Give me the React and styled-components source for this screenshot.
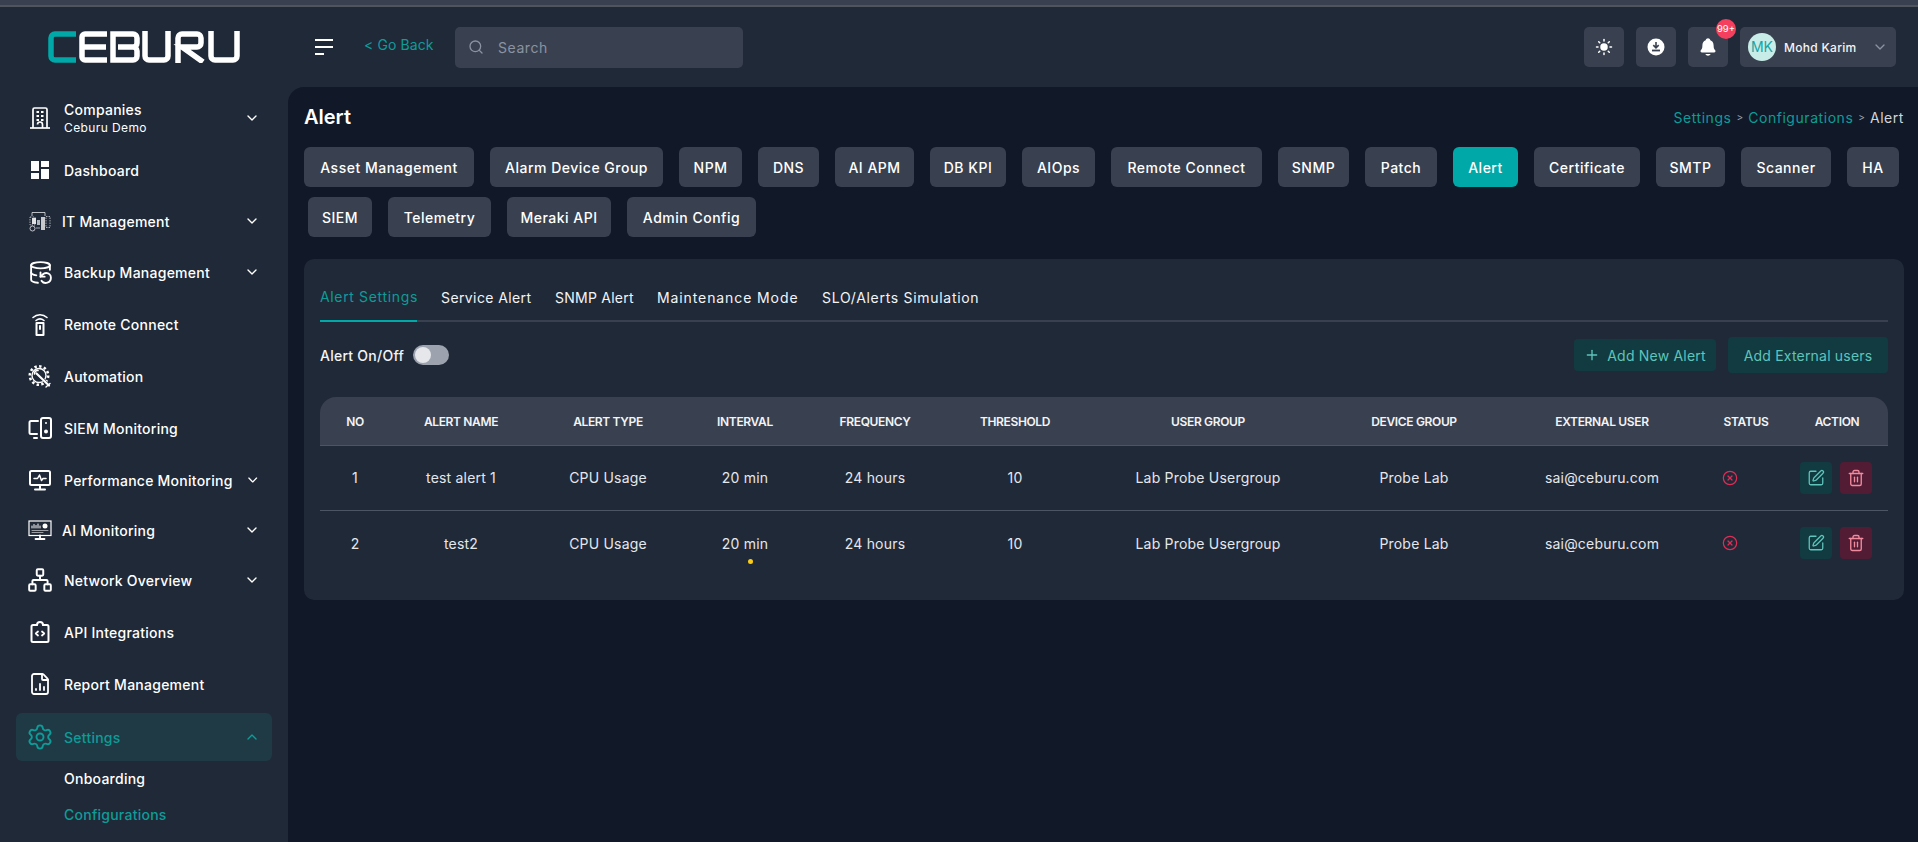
import styled, { createGlobalStyle } from "styled-components";
import {
  ChevronDown,
  ChevronUp,
  CircleX,
  DatabaseBackup,
  FileChartColumn,
  Network,
  Plus,
  Search,
  Settings,
  SquarePen,
  Sun,
  Trash2,
} from "lucide-react";
import { MdDashboard } from "react-icons/md";
import { IoNotifications } from "react-icons/io5";

/* theme */
const COLORS = {
  panel: "#202938",
  page: "#111827",
  control: "#394150",
  line: "#4b5563",
  teal: "#0d9c98",
  tealBright: "#00a8a8",
  tealSoft: "#5fc4bb",
  tealDark: "#113b40",
  roseDark: "#521c35",
  rose: "#e02d55",
  text: "#f3f4f6",
};

const FONT = `Inter, "Open Sans", "Liberation Sans", sans-serif`;

const GlobalStyle = createGlobalStyle`
  * { box-sizing: border-box; }
  html, body { margin: 0; height: 100%; background: ${COLORS.panel}; overflow: hidden; }
  body { font-family: ${FONT}; color: ${COLORS.text}; }
`;

/* drawn icons, no package has these */
const CompanyIcon = () => (
  <svg width="24" height="24" viewBox="0 0 24 24" fill="none" stroke="#fff" strokeWidth="1.700">
    <path d="M5 22V3.500A1.500 1.500 0 0 1 6.500 2h11A1.500 1.500 0 0 1 19 3.500V22" />
    <path d="M2 22h20" />
    <path d="M9.500 18.500a2.500 2.500 0 0 1 5 0V22" />
    <path d="M8.500 6h2.500M13 6h2.500M8.500 10h2.500M13 10h2.500M8.500 14h2.500M13 14h2.500" strokeWidth="2" />
  </svg>
);

const ItIcon = () => (
  <svg width="22" height="22" viewBox="0 0 22 22" fill="none" stroke="#fff">
    <path d="M3 6V2.500h13V6" strokeWidth="1" opacity=".7" />
    <path d="M1 7h5v8H1zM17 6.500h4v11h-4z" strokeWidth="1" strokeDasharray="1.500 1" opacity=".6" />
    <path d="M3 8h4v6H3z" fill="#fff" stroke="none" opacity=".85" />
    <path d="M8 10h3v5H8z" fill="#fff" stroke="none" opacity=".65" />
    <path d="M12 7h4v13h-4z" fill="#fff" stroke="none" opacity=".75" />
    <circle cx="3.500" cy="18.500" r="2.500" strokeWidth="1" opacity=".7" />
    <path d="M7 18h4" strokeWidth="1" opacity=".6" />
  </svg>
);

const RemoteIcon = () => (
  <svg width="24" height="24" viewBox="0 0 24 24" fill="none" stroke="#fff" strokeWidth="2" strokeLinecap="round">
    <path d="M5 5.500C9 1.800 15 1.800 19 5.500" strokeWidth="1.600" />
    <path d="M8 8.500c2.500-2 5.500-2 8 0" strokeWidth="1.600" />
    <path d="M8.500 11h7v12h-7z" strokeLinejoin="round" />
    <path d="M12 14v3" />
  </svg>
);

const AutomationIcon = () => (
  <svg width="24" height="24" viewBox="0 0 24 24" fill="none" stroke="#fff" strokeLinecap="round">
    <circle cx="11" cy="11.500" r="9.200" strokeWidth="2.600" strokeDasharray="2.400 2.400" strokeLinecap="butt" />
    <circle cx="11" cy="11.500" r="7" strokeWidth="1.400" />
    <path d="M7.500 8.500 L20 20.500" strokeWidth="3" stroke="#202938" />
    <path d="M8.500 9.500 L21 21.500" strokeWidth="2.200" />
    <path d="M6.500 10a3 3 0 0 1 3.500-3.500" strokeWidth="1.600" />
    <path d="M18 23l4-3.500" strokeWidth="1.400" />
  </svg>
);

const SiemIcon = () => (
  <svg width="24" height="24" viewBox="0 0 24 24" fill="none" stroke="#fff" strokeWidth="2" strokeLinecap="round" strokeLinejoin="round">
    <path d="M10 5H3a1.500 1.500 0 0 0-1.500 1.500v10A1.500 1.500 0 0 0 3 18h6" />
    <path d="M6 22h3" />
    <rect x="13" y="2" width="10" height="20" rx="2" />
    <circle cx="18" cy="7" r="1" fill="#fff" stroke="none" />
    <circle cx="18" cy="15.500" r="2" fill="#fff" stroke="none" />
  </svg>
);

const PerformanceIcon = () => (
  <svg width="24" height="24" viewBox="0 0 24 24" fill="none" stroke="#fff" strokeWidth="2" strokeLinecap="round" strokeLinejoin="round">
    <rect x="2" y="3" width="20" height="14" rx="1.500" />
    <path d="M6 10.500h3.500l2-3.500 2 5.500 1.500-2h3" strokeWidth="1.500" />
    <path d="M12 17v4M7 21.500h10" />
  </svg>
);

const AiIcon = () => (
  <svg width="24" height="24" viewBox="0 0 24 24" fill="none" stroke="#fff" strokeLinecap="round">
    <rect x="1" y="3" width="22" height="14.500" strokeWidth="1.200" />
    <path d="M4 10V8M6 10V6.500M8 10V7.500M10 10V6M12 10V8" strokeWidth="1" />
    <circle cx="17" cy="8" r="2.500" fill="#fff" stroke="none" />
    <path d="M4 12.500h16M4 14.500h11" strokeWidth=".8" opacity=".7" />
    <path d="M12 17.500v3M7.500 21h9" strokeWidth="1.800" />
  </svg>
);

const ApiIcon = () => (
  <svg width="24" height="24" viewBox="0 0 24 24" fill="none" stroke="#fff" strokeWidth="2" strokeLinecap="round" strokeLinejoin="round">
    <path d="M9 5H5a1.500 1.500 0 0 0-1.500 1.500v14A1.500 1.500 0 0 0 5 22h14a1.500 1.500 0 0 0 1.500-1.500v-14A1.500 1.500 0 0 0 19 5h-4" />
    <path d="M9 5a3 3 0 0 1 6 0" />
    <path d="M10 11.500 7.800 13.500l2.200 2M14 11.500l2.200 2-2.200 2" strokeWidth="1.800" />
  </svg>
);

const DownloadIcon = () => (
  <svg width="18" height="18" viewBox="0 0 18 18">
    <circle cx="9" cy="9" r="8.500" fill="#fff" />
    <path d="M9 4v5.500M6.300 7.200 9 9.800l2.700-2.600" fill="none" stroke={COLORS.control} strokeWidth="1.600" />
    <path d="M5 12.500h8" stroke={COLORS.control} strokeWidth="1.800" />
  </svg>
);

const Logo = () => (
  <svg width="192" height="32" viewBox="0 0 192 32" fill="none" strokeWidth="5.500" role="img" aria-label="CEBURU">
    <path d="M28 3H7a4 4 0 0 0-4 4v18a4 4 0 0 0 4 4h21" stroke={COLORS.tealBright} />
    <g stroke="#fff">
      <path d="M59 3H37a3 3 0 0 0-3 3v20a3 3 0 0 0 3 3h22M34 16h24" />
      <path d="M65 3h20a4 4 0 0 1 4 4v5a4 4 0 0 1-4 4H70h15a4 4 0 0 1 4 4v5a4 4 0 0 1-4 4H65z" />
      <path d="M97 0v25a4 4 0 0 0 4 4h15a4 4 0 0 0 4-4V0" />
      <path d="M130 32V7a4 4 0 0 1 4-4h15a4 4 0 0 1 4 4v5a4 4 0 0 1-4 4h-15l21 15" />
      <path d="M163 0v25a4 4 0 0 0 4 4h18a4 4 0 0 0 4-4V0" />
    </g>
  </svg>
);

/* shell */
const Strip = styled.div`
  height: 7px;
  background: ${COLORS.control};
  border-bottom: 2px solid #50545c;
`;

const Shell = styled.div`
  display: grid;
  grid-template-columns: 288px 1fr;
  height: 835px;
`;

/* sidebar */
const Sidebar = styled.aside`
  background: ${COLORS.panel};
  padding: 0 16px;
  overflow: hidden;
`;

const LogoWrap = styled.div`
  height: 84px;
  padding: 24px 0 0 32px;
`;

const NavRow = styled.div`
  display: flex;
  align-items: center;
  height: ${({ $h }) => $h || 52}px;
  padding: 0 12px;
  gap: ${({ $gap }) => $gap || 12}px;
  border-radius: 6px;
  font-size: 14px;
  font-weight: 500;
  letter-spacing: 0.25px;
  color: ${({ $active }) => ($active ? COLORS.teal : "#fff")};
  background: ${({ $active }) => ($active ? "#1f3a45" : "transparent")};
  margin-top: ${({ $active }) => ($active ? "3px" : "0")};
`;

const NavIcon = styled.span`
  display: flex;
  justify-content: center;
  width: 24px;
  flex: none;

  svg {
    flex: none;
  }
`;

const NavText = styled.span`
  flex: 1;
  white-space: nowrap;
`;

const NavSub = styled.div`
  font-size: 12px;
  font-weight: 400;
  line-height: 16px;
  letter-spacing: 0.4px;
`;

const NavTitle = styled.div`
  line-height: 20px;
`;

const SubLink = styled.div`
  height: 36px;
  line-height: 36px;
  padding-left: 48px;
  font-size: 14px;
  font-weight: 500;
  letter-spacing: 0.25px;
  color: ${({ $active }) => ($active ? COLORS.teal : "#fff")};
`;

/* topbar */
const Column = styled.div`
  display: flex;
  flex-direction: column;
  min-width: 0;
`;

const Topbar = styled.header`
  flex: none;
  height: 80px;
  display: flex;
  align-items: center;
  padding: 0 22px 0 27px;
  background: ${COLORS.panel};
`;

const Burger = styled.button`
  display: flex;
  flex-direction: column;
  gap: 5px;
  width: 18px;
  padding: 0;
  border: 0;
  background: none;
  margin-right: 31px;

  span {
    height: 2px;
    background: #fff;
  }
  span:last-child {
    width: 9px;
  }
`;

const GoBack = styled.a`
  width: 91px;
  margin-top: -6px;
  font-size: 14px;
  letter-spacing: 0.1px;
  color: ${COLORS.teal};
`;

const SearchBox = styled.label`
  width: 288px;
  height: 41px;
  display: flex;
  align-items: center;
  gap: 14px;
  padding-left: 13px;
  border-radius: 5px;
  background: ${COLORS.control};
  color: #8b93a1;
  font-size: 14px;
  letter-spacing: 0.55px;
`;

const TopActions = styled.div`
  margin-left: auto;
  display: flex;
  align-items: center;
  gap: 12px;
`;

const IconButton = styled.button`
  position: relative;
  width: 40px;
  height: 40px;
  display: flex;
  align-items: center;
  justify-content: center;
  padding: 0;
  border: 0;
  border-radius: 5px;
  background: ${COLORS.control};
  color: #fff;
`;

const Badge = styled.span`
  position: absolute;
  top: -8px;
  right: -8px;
  width: 20px;
  height: 20px;
  border-radius: 50%;
  background: #f43f5e;
  font-family: ${FONT};
  font-size: 9.500px;
  line-height: 20px;
  text-align: center;
  color: #fff;
`;

const UserMenu = styled.div`
  width: 156px;
  height: 40px;
  display: flex;
  align-items: center;
  padding: 0 8px;
  border-radius: 5px;
  background: ${COLORS.control};
  font-size: 12px;
  font-weight: 500;
  letter-spacing: 0.3px;

  svg {
    margin-left: auto;
    margin-right: 0;
    color: #8b93a1;
  }
`;

const Avatar = styled.span`
  width: 28px;
  height: 28px;
  margin-right: 8px;
  border-radius: 50%;
  background: #c8ece8;
  color: #17a5a5;
  font-size: 14px;
  font-weight: 400;
  letter-spacing: 0;
  line-height: 28px;
  text-align: center;
`;

/* page */
const Main = styled.main`
  flex: 1;
  padding: 16px 14px 0 16px;
  background: ${COLORS.page};
  border-top-left-radius: 16px;
`;

const TitleRow = styled.div`
  display: flex;
  align-items: center;
  justify-content: space-between;
  height: 28px;
`;

const PageTitle = styled.h1`
  margin: 0;
  font-size: 20px;
  font-weight: 600;
  color: #fff;
`;

const Crumbs = styled.nav`
  display: flex;
  align-items: center;
  gap: 5px;
  font-size: 14px;
  letter-spacing: 0.55px;
  color: #d1d5db;

  a {
    color: ${COLORS.teal};
  }
`;

const CrumbSep = styled.span`
  font-size: 10px;
  letter-spacing: 0;
  color: #9ca3af;
`;

const ChipRow = styled.div`
  display: flex;
  gap: 16px;
  margin-top: ${({ $top }) => $top}px;
  padding-left: ${({ $inset }) => $inset || 0}px;
`;

const Chip = styled.button`
  width: ${({ $w }) => $w}px;
  height: 40px;
  padding: 0;
  border: 0;
  border-radius: 6px;
  background: ${({ $active }) => ($active ? COLORS.tealBright : COLORS.control)};
  color: #fff;
  font-family: ${FONT};
  font-size: 14px;
  font-weight: 500;
  letter-spacing: 0.5px;
  white-space: nowrap;
`;

const Card = styled.section`
  margin-top: 22px;
  padding: 22px 16px 24px;
  border-radius: 10px;
  background: ${COLORS.panel};
`;

const TabBar = styled.div`
  display: flex;
  gap: 24px;
  border-bottom: 2px solid ${COLORS.control};
`;

const Tab = styled.a`
  width: ${({ $w }) => $w}px;
  height: 41px;
  margin-bottom: -2px;
  padding-top: ${({ $active }) => ($active ? 7 : 8)}px;
  border-bottom: 2px solid ${({ $active }) => ($active ? COLORS.tealBright : "transparent")};
  font-size: 14px;
  font-weight: 400;
  line-height: 18px;
  letter-spacing: ${({ $ls }) => $ls}px;
  white-space: nowrap;
  color: ${({ $active }) => ($active ? COLORS.teal : "#f3f4f6")};
`;

const Toolbar = styled.div`
  display: flex;
  align-items: center;
  height: 36px;
  margin-top: 15px;
`;

const ToggleLabel = styled.span`
  font-size: 14px;
  font-weight: 500;
  letter-spacing: 0.25px;
  margin-right: 9px;
`;

const Toggle = styled.span`
  display: flex;
  align-items: center;
  width: 36px;
  height: 20px;
  padding: 2px;
  border-radius: 10px;
  background: #9ca3af;

  &::before {
    content: "";
    width: 16px;
    height: 16px;
    border-radius: 50%;
    background: #e5e7eb;
  }
`;

const ActionGroup = styled.div`
  margin-left: auto;
  display: flex;
  align-items: center;
  gap: 12px;
`;

const TealButton = styled.button`
  display: flex;
  align-items: center;
  justify-content: center;
  gap: 7px;
  width: ${({ $w }) => $w}px;
  height: ${({ $h }) => $h}px;
  padding: 0;
  border: 0;
  border-radius: 4px;
  background: ${COLORS.tealDark};
  color: ${COLORS.tealSoft};
  font-family: ${FONT};
  font-size: 14px;
  letter-spacing: 0.2px;
`;

/* table */
const GRID = "70px 142px 152px 122px 138px 142px 244px 168px 208px 80px 102px";

const TableHead = styled.div`
  display: grid;
  grid-template-columns: ${GRID};
  align-items: center;
  height: 49px;
  margin-top: 24px;
  border-radius: 16px 16px 0 0;
  border-bottom: 1px solid ${COLORS.line};
  background: ${COLORS.control};
  font-size: 12px;
  font-weight: 600;
  letter-spacing: -0.35px;
  text-align: center;
  text-transform: uppercase;
`;

const TableRow = styled.div`
  display: grid;
  grid-template-columns: ${GRID};
  align-items: center;
  height: 65px;
  padding-bottom: 1px;
  border-bottom: ${({ $last }) => ($last ? "0" : `1px solid ${COLORS.line}`)};
  font-size: 14px;
  letter-spacing: 0.2px;
  color: #e5e7eb;
  text-align: center;
`;

const Cell = styled.div`
  position: relative;
`;

const StatusCell = styled.div`
  display: flex;
  padding-left: 16px;
  color: ${COLORS.rose};
`;

const ActionCell = styled.div`
  display: flex;
  justify-content: center;
  gap: 8px;
  padding-right: 2px;
`;

const RowButton = styled.button`
  width: 32px;
  height: 32px;
  display: flex;
  align-items: center;
  justify-content: center;
  padding: 0;
  border: 0;
  border-radius: 4px;
  background: ${({ $danger }) => ($danger ? COLORS.roseDark : COLORS.tealDark)};
  color: ${({ $danger }) => ($danger ? "#f08a9e" : COLORS.tealSoft)};
`;

const Dot = styled.span`
  position: absolute;
  left: 64px;
  top: 24px;
  width: 5px;
  height: 5px;
  border-radius: 50%;
  background: #facc15;
`;

const NAV = [
  { label: "Dashboard", icon: <MdDashboard size={24} /> },
  { label: "IT Management", icon: <ItIcon />, chevron: true, h: 50, gap: 10 },
  { label: "Backup Management", icon: <DatabaseBackup size={25} strokeWidth={1.8} />, chevron: true },
  { label: "Remote Connect", icon: <RemoteIcon /> },
  { label: "Automation", icon: <AutomationIcon /> },
  { label: "SIEM Monitoring", icon: <SiemIcon /> },
  { label: "Performance Monitoring", icon: <PerformanceIcon />, chevron: true },
  { label: "AI Monitoring", icon: <AiIcon />, chevron: true, h: 48, gap: 10 },
  { label: "Network Overview", icon: <Network size={26} strokeWidth={1.8} />, chevron: true },
  { label: "API Integrations", icon: <ApiIcon /> },
  { label: "Report Management", icon: <FileChartColumn size={24} strokeWidth={1.8} /> },
];

const CHIPS = [
  ["Asset Management", 170],
  ["Alarm Device Group", 173],
  ["NPM", 63],
  ["DNS", 61],
  ["AI APM", 79],
  ["DB KPI", 76],
  ["AIOps", 73],
  ["Remote Connect", 151],
  ["SNMP", 71],
  ["Patch", 72],
  ["Alert", 65],
  ["Certificate", 106],
  ["SMTP", 69],
  ["Scanner", 90],
  ["HA", 52],
];

const CHIPS_2 = [
  ["SIEM", 64],
  ["Telemetry", 103],
  ["Meraki API", 104],
  ["Admin Config", 129],
];

const TABS = [
  { label: "Alert Settings", w: 97, ls: 0.65 },
  { label: "Service Alert", w: 90, ls: 0.4 },
  { label: "SNMP Alert", w: 78, ls: 0.25 },
  { label: "Maintenance Mode", w: 141, ls: 0.9 },
  { label: "SLO/Alerts Simulation", w: 157, ls: 0.7 },
];

const HEADS = [
  "No",
  "Alert Name",
  "Alert Type",
  "Interval",
  "Frequency",
  "Threshold",
  "User Group",
  "Device Group",
  "External User",
  "Status",
  "Action",
];

const ROWS = [
  { no: 1, name: "test alert 1" },
  { no: 2, name: "test2", dot: true },
];

export default function App() {
  return (
    <>
      <GlobalStyle />
      <Strip />
      <Shell>
        <Sidebar>
          <LogoWrap>
            <Logo />
          </LogoWrap>
          <NavRow $h={53}>
            <NavIcon>
              <CompanyIcon />
            </NavIcon>
            <NavText>
              <NavTitle>Companies</NavTitle>
              <NavSub>Ceburu Demo</NavSub>
            </NavText>
            <ChevronDown size={16} />
          </NavRow>
          {NAV.map((item) => (
            <NavRow key={item.label} $h={item.h} $gap={item.gap}>
              <NavIcon>{item.icon}</NavIcon>
              <NavText>{item.label}</NavText>
              {item.chevron && <ChevronDown size={16} />}
            </NavRow>
          ))}
          <NavRow $h={48} $active>
            <NavIcon>
              <Settings size={28} strokeWidth={1.6} />
            </NavIcon>
            <NavText>Settings</NavText>
            <ChevronUp size={16} />
          </NavRow>
          <SubLink>Onboarding</SubLink>
          <SubLink $active>Configurations</SubLink>
        </Sidebar>

        <Column>
          <Topbar>
            <Burger aria-label="Menu">
              <span />
              <span />
              <span />
            </Burger>
            <GoBack>&lt; Go Back</GoBack>
            <SearchBox>
              <Search size={16} />
              Search
            </SearchBox>
            <TopActions>
              <IconButton aria-label="Theme">
                <Sun size={18} fill="#fff" />
              </IconButton>
              <IconButton aria-label="Download">
                <DownloadIcon />
              </IconButton>
              <IconButton aria-label="Notifications">
                <IoNotifications size={20} />
                <Badge>99+</Badge>
              </IconButton>
              <UserMenu>
                <Avatar>MK</Avatar>
                Mohd Karim
                <ChevronDown size={16} />
              </UserMenu>
            </TopActions>
          </Topbar>

          <Main>
            <TitleRow>
              <PageTitle>Alert</PageTitle>
              <Crumbs>
                <a>Settings</a>
                <CrumbSep>&gt;</CrumbSep>
                <a>Configurations</a>
                <CrumbSep>&gt;</CrumbSep>
                Alert
              </Crumbs>
            </TitleRow>
            <ChipRow $top={16}>
              {CHIPS.map(([label, w]) => (
                <Chip key={label} $w={w} $active={label === "Alert"}>
                  {label}
                </Chip>
              ))}
            </ChipRow>
            <ChipRow $top={10} $inset={4}>
              {CHIPS_2.map(([label, w]) => (
                <Chip key={label} $w={w}>
                  {label}
                </Chip>
              ))}
            </ChipRow>

            <Card>
              <TabBar>
                {TABS.map((tab, i) => (
                  <Tab key={tab.label} $w={tab.w} $ls={tab.ls} $active={i === 0}>
                    {tab.label}
                  </Tab>
                ))}
              </TabBar>
              <Toolbar>
                <ToggleLabel>Alert On/Off</ToggleLabel>
                <Toggle />
                <ActionGroup>
                  <TealButton $w={142} $h={32}>
                    <Plus size={16} />
                    Add New Alert
                  </TealButton>
                  <TealButton $w={160} $h={36}>
                    Add External users
                  </TealButton>
                </ActionGroup>
              </Toolbar>

              <TableHead>
                {HEADS.map((head) => (
                  <div key={head}>{head}</div>
                ))}
              </TableHead>
              {ROWS.map((row, i) => (
                <TableRow key={row.no} $last={i === ROWS.length - 1}>
                  <Cell>{row.no}</Cell>
                  <Cell>{row.name}</Cell>
                  <Cell>CPU Usage</Cell>
                  <Cell>
                    20 min
                    {row.dot && <Dot />}
                  </Cell>
                  <Cell>24 hours</Cell>
                  <Cell>10</Cell>
                  <Cell>Lab Probe Usergroup</Cell>
                  <Cell>Probe Lab</Cell>
                  <Cell>sai@ceburu.com</Cell>
                  <StatusCell>
                    <CircleX size={16} strokeWidth={1.8} />
                  </StatusCell>
                  <ActionCell>
                    <RowButton aria-label="Edit">
                      <SquarePen size={18} strokeWidth={1.7} />
                    </RowButton>
                    <RowButton $danger aria-label="Delete">
                      <Trash2 size={18} strokeWidth={1.8} />
                    </RowButton>
                  </ActionCell>
                </TableRow>
              ))}
            </Card>
          </Main>
        </Column>
      </Shell>
    </>
  );
}
